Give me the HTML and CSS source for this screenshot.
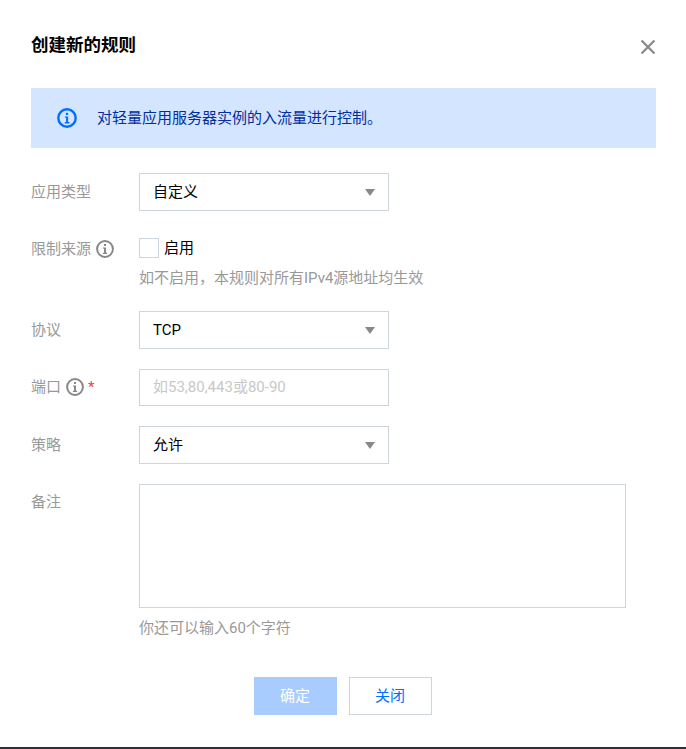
FILE: index.html
```html
<!DOCTYPE html>
<html lang="zh-CN">
<head>
<meta charset="utf-8">
<title>创建新的规则</title>
<link rel="stylesheet" href="styles.css">
</head>
<body>
<div class="dialog">
  <header class="head">
    <h1 class="title">创建新的规则</h1>
    <button class="close" type="button" aria-label="关闭">
      <svg width="16" height="16" viewBox="0 0 16 16"><path d="M1.5 1.5 14.5 14.5M14.5 1.5 1.5 14.5" stroke="#888" stroke-width="2.2" fill="none"/></svg>
    </button>
  </header>
  <div class="banner">
    <svg class="banner-icon" width="20" height="20" viewBox="0 0 20 20"><circle cx="10" cy="10" r="8.7" fill="none" stroke="#006eff" stroke-width="2.4"/><rect x="8.9" y="4.8" width="2.2" height="2.2" fill="#006eff"/><path d="M8 8.4h3.1v5.6H12.4v1.4H7.8V14h1.3V9.8H8z" fill="#006eff"/></svg>
    <span>对轻量应用服务器实例的入流量进行控制。</span>
  </div>
  <form class="form">
    <div class="row">
      <div class="label">应用类型</div>
      <div class="select"><span>自定义</span><i class="arrow"></i></div>
    </div>
    <div class="row">
      <div class="label">限制来源
        <svg class="tip" width="18" height="18" viewBox="0 0 18 18"><circle cx="9" cy="9" r="7.9" fill="none" stroke="#888" stroke-width="2"/><rect x="8" y="4" width="2" height="2" fill="#888"/><path d="M7 7.4h3v5.4h1.2V14H6.9v-1.2H8V8.6H7z" fill="#888"/></svg>
      </div>
      <div class="field">
        <div class="check"><span class="box"></span><span class="check-text">启用</span></div>
        <div class="hint hint-check">如不启用，本规则对所有IPv4源地址均生效</div>
      </div>
    </div>
    <div class="row">
      <div class="label">协议</div>
      <div class="select"><span>TCP</span><i class="arrow"></i></div>
    </div>
    <div class="row">
      <div class="label">端口
        <svg class="tip" width="18" height="18" viewBox="0 0 18 18"><circle cx="9" cy="9" r="7.9" fill="none" stroke="#888" stroke-width="2"/><rect x="8" y="4" width="2" height="2" fill="#888"/><path d="M7 7.4h3v5.4h1.2V14H6.9v-1.2H8V8.6H7z" fill="#888"/></svg>
        <span class="req">*</span>
      </div>
      <div class="input">如53,80,443或80-90</div>
    </div>
    <div class="row">
      <div class="label">策略</div>
      <div class="select"><span>允许</span><i class="arrow"></i></div>
    </div>
    <div class="row">
      <div class="label">备注</div>
      <div class="field">
        <div class="textarea"></div>
        <div class="hint hint-area">你还可以输入60个字符</div>
      </div>
    </div>
  </form>
  <footer class="foot">
    <button class="btn btn-primary" type="button">确定</button>
    <button class="btn btn-default" type="button">关闭</button>
  </footer>
</div>
<div class="edge"></div>
</body>
</html>
```
FILE: styles.css
```css
* { box-sizing: border-box; }
html, body { margin: 0; padding: 0; background: #fff; }
body {
  width: 686px;
  height: 749px;
  overflow: hidden;
  display: flex;
  flex-direction: column;
  font-family: "Roboto", "Noto Sans CJK SC", sans-serif;
  font-size: 15px;
  color: #000;
}
.dialog { flex: 1; padding: 0 30px 0 31px; }
.head { height: 88px; display: flex; align-items: flex-start; justify-content: space-between; padding-top: 32px; }
.title { margin: 0; font-size: 17.5px; line-height: 26px; font-weight: 700; color: #000; }
.close { width: 16px; height: 16px; padding: 0; margin-top: 7px; margin-right: 0; border: 0; background: none; display: block; }
.close svg { display: block; }
.banner {
  height: 60px;
  background: #d4e5ff;
  display: flex;
  align-items: center;
  gap: 20px;
  padding-left: 26px;
  color: #002da0;
  line-height: 20px;
}
.form { margin-top: 25px; display: flex; flex-direction: column; gap: 20px; }
.row { display: flex; align-items: flex-start; }
.label {
  width: 108px;
  flex: none;
  display: flex;
  align-items: center;
  gap: 5px;
  height: 37.5px;
  color: #999;
  line-height: 20px;
}
.select, .input {
  width: 250px;
  height: 37.5px;
  border: 1px solid #cfd5de;
  display: flex;
  align-items: center;
  justify-content: space-between;
  padding: 0 13px;
  line-height: 20px;
}
.input { color: #c8c8c8; }
.arrow { width: 0; height: 0; border-left: 5px solid transparent; border-right: 5px solid transparent; border-top: 7px solid #888; margin-top: 1px; }
.tip { flex: none; }
.req { color: #e54545; margin-left: -1px; }
.field { display: flex; flex-direction: column; }
.check { display: flex; align-items: center; gap: 5px; height: 20px; margin-top: 7.5px; }
.box { width: 20px; height: 20px; border: 1px solid #cfd5de; background: #fff; }
.check-text { line-height: 20px; color: #000; }
.hint { color: #999; line-height: 20px; }
.hint-check { margin-top: 10px; height: 23px; }
.textarea { width: 487px; height: 124.5px; border: 1px solid #cfd5de; }
.hint-area { margin-top: 10px; }
.foot { margin-top: 39px; display: flex; justify-content: center; gap: 12px; padding-right: 2px; }
.btn { width: 83px; height: 38px; padding: 0; font: inherit; display: block; line-height: 20px; }
.btn-primary { background: #a9ccff; border: 0; color: #fff; }
.btn-default { background: #fff; border: 1px solid #cfd5de; color: #006eff; }
.edge { height: 2px; flex: none; background: #2e3033; }
```
